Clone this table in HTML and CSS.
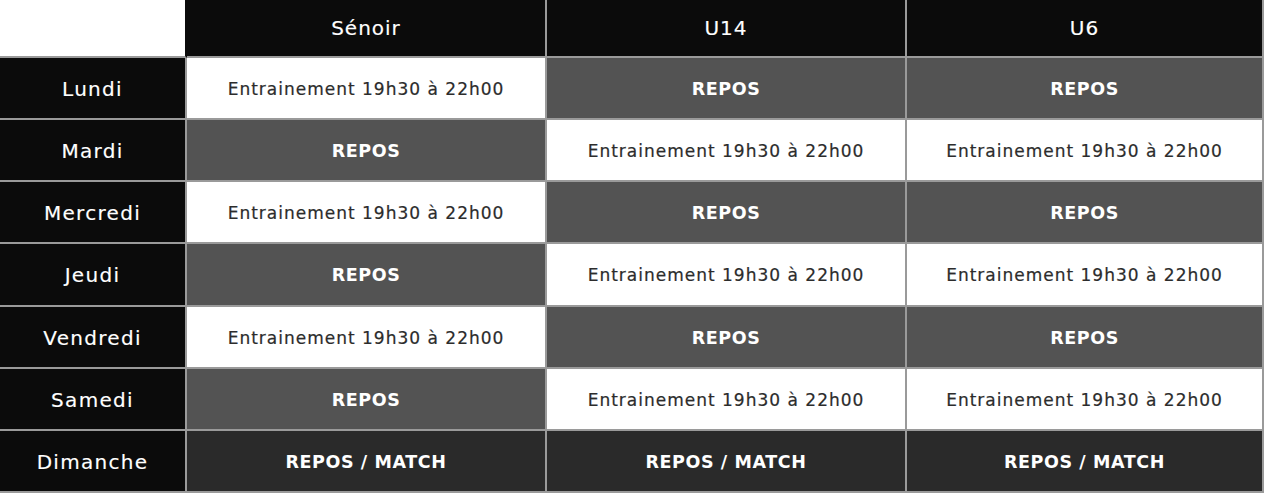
FILE: index.html
```html
<!DOCTYPE html>
<html lang="fr">
<head>
<meta charset="utf-8">
<title>Planning</title>
<link rel="stylesheet" href="styles.css">
</head>
<body>
<table class="planning">
  <thead>
    <tr class="head-row">
      <th class="corner"></th>
      <th class="team col-a">Sénoir</th>
      <th class="team col-b">U14</th>
      <th class="team col-c">U6</th>
    </tr>
  </thead>
  <tbody>
    <tr class="row">
      <th class="day">Lundi</th>
      <td class="train">Entrainement 19h30 à 22h00</td>
      <td class="rest">REPOS</td>
      <td class="rest">REPOS</td>
    </tr>
    <tr class="row">
      <th class="day">Mardi</th>
      <td class="rest">REPOS</td>
      <td class="train">Entrainement 19h30 à 22h00</td>
      <td class="train">Entrainement 19h30 à 22h00</td>
    </tr>
    <tr class="row">
      <th class="day">Mercredi</th>
      <td class="train">Entrainement 19h30 à 22h00</td>
      <td class="rest">REPOS</td>
      <td class="rest">REPOS</td>
    </tr>
    <tr class="row">
      <th class="day">Jeudi</th>
      <td class="rest">REPOS</td>
      <td class="train">Entrainement 19h30 à 22h00</td>
      <td class="train">Entrainement 19h30 à 22h00</td>
    </tr>
    <tr class="row">
      <th class="day">Vendredi</th>
      <td class="train">Entrainement 19h30 à 22h00</td>
      <td class="rest">REPOS</td>
      <td class="rest">REPOS</td>
    </tr>
    <tr class="row">
      <th class="day">Samedi</th>
      <td class="rest">REPOS</td>
      <td class="train">Entrainement 19h30 à 22h00</td>
      <td class="train">Entrainement 19h30 à 22h00</td>
    </tr>
    <tr class="row">
      <th class="day">Dimanche</th>
      <td class="match">REPOS / MATCH</td>
      <td class="match">REPOS / MATCH</td>
      <td class="match">REPOS / MATCH</td>
    </tr>
  </tbody>
</table>
</body>
</html>
```

FILE: styles.css
```css
html, body {
  margin: 0;
  padding: 0;
  background: #ffffff;
  overflow: hidden;
}

.planning {
  width: 1264px;
  table-layout: fixed;
  border-collapse: separate;
  border-spacing: 0;
  font-family: "DejaVu Sans", "Liberation Sans", sans-serif;
}

.planning th,
.planning td {
  box-sizing: border-box;
  padding: 0;
  text-align: center;
  vertical-align: middle;
  border-right: 2px solid #9a9a9a;
  border-bottom: 2px solid #9a9a9a;
}

.head-row {
  height: 58px;
}

.corner {
  width: 187px;
  background: #ffffff;
  border-right-color: #0b0b0b !important;
}

.col-a,
.col-b {
  width: 360px;
}

.col-c {
  width: 357px;
}

.team {
  background: #0b0b0b;
  color: #ffffff;
  font-weight: 400;
  font-size: 20px;
  letter-spacing: 1px;
  -webkit-text-stroke: 0.15px #ffffff;
}

.row {
  height: 62.14px;
}

.row > th,
.row > td {
  padding-top: 2px;
}

.day {
  background: #0b0b0b;
  color: #ffffff;
  font-weight: 400;
  font-size: 20px;
  letter-spacing: 1.3px;
  -webkit-text-stroke: 0.15px #ffffff;
}

.train {
  background: #ffffff;
  color: #2c2c2c;
  font-size: 17px;
  letter-spacing: 1px;
  -webkit-text-stroke: 0.2px #2c2c2c;
}

.rest {
  background: #535353;
  color: #ffffff;
  font-weight: 700;
  font-size: 17.5px;
  letter-spacing: 0.6px;
}

.match {
  background: #2a2a2a;
  color: #ffffff;
  font-weight: 700;
  font-size: 17.5px;
  letter-spacing: 0.6px;
}
```
